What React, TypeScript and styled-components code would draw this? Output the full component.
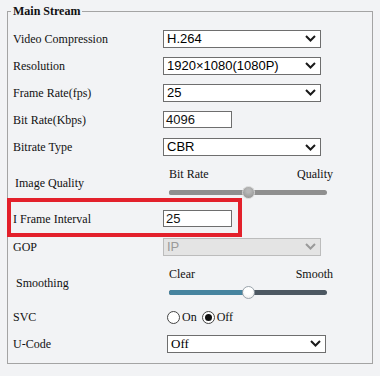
import React from 'react'
import styled, { createGlobalStyle } from 'styled-components'

const GlobalStyle = createGlobalStyle`
    html, body {
        margin: 0;
        padding: 0;
        background: #f2f3f5;
    }
    body {
        font-family: "Liberation Serif", "Times New Roman", serif;
        color: #111;
    }
`

const Page = styled.div`
    width: 380px;
    height: 376px;
    padding: 4px 7px 0 7px;
    box-sizing: border-box;
`

const Fieldset = styled.fieldset`
    margin: 0;
    padding: 7px 0 6px 0;
    border: 1px solid #a4a4a4;
    min-width: 0;
`

const Legend = styled.legend`
    margin-left: 3px;
    padding: 0 2px;
    font-size: 12px;
    line-height: 14px;
    font-weight: bold;
    color: #111;
`

const Row = styled.div<{ $h?: number }>`
    position: relative;
    display: flex;
    align-items: center;
    height: ${p => p.$h ?? 27}px;
    padding-left: 5px;
`

const Label = styled.div<{ $indent?: number }>`
    width: ${p => 150 - (p.$indent ?? 0)}px;
    padding-left: ${p => p.$indent ?? 0}px;
    font-size: 12px;
    line-height: 14px;
    flex-shrink: 0;
`

const Control = styled.div<{ $offset?: number }>`
    display: flex;
    align-items: center;
    padding-left: ${p => p.$offset ?? 0}px;
`

const SelectBox = styled.div<{ $disabled?: boolean; $serif?: boolean; $w?: number }>`
    box-sizing: border-box;
    width: ${p => p.$w ?? 158}px;
    height: 18px;
    display: flex;
    align-items: center;
    justify-content: space-between;
    padding: 0 4px 0 3px;
    border: 1px solid ${p => (p.$disabled ? '#bcbcbc' : '#6e6e6e')};
    background: ${p => (p.$disabled ? '#e4e4e4' : '#fff')};
    color: ${p => (p.$disabled ? '#9a9a9a' : '#000')};
    font-family: ${p => (p.$serif ? '"Liberation Serif", serif' : '"Liberation Sans", Arial, sans-serif')};
    font-size: 13px;
    line-height: 16px;
`

const TextInput = styled.div`
    box-sizing: border-box;
    width: 69px;
    height: 17px;
    display: flex;
    align-items: center;
    padding-left: 2px;
    border: 1px solid #6e6e6e;
    background: #fff;
    font-family: "Liberation Sans", Arial, sans-serif;
    font-size: 13px;
`

const Highlight = styled.div`
    position: absolute;
    left: -1px;
    top: -7px;
    width: 235px;
    height: 39px;
    box-sizing: border-box;
    border: 4px solid #e3202b;
    pointer-events: none;
`

const SliderWrap = styled.div`
    width: 164px;
    display: flex;
    flex-direction: column;
    gap: 5px;
`

const SliderLabels = styled.div`
    display: flex;
    justify-content: space-between;
    font-size: 12px;
    line-height: 14px;
`

const Track = styled.div<{ $left: string; $right: string }>`
    position: relative;
    width: 158px;
    height: 13px;
    &::before {
        content: '';
        position: absolute;
        left: 0;
        right: 0;
        top: 4px;
        height: 5px;
        border-radius: 3px;
        background: ${p => p.$right};
    }
    &::after {
        content: '';
        position: absolute;
        left: 0;
        width: 50%;
        top: 4px;
        height: 5px;
        border-radius: 3px 0 0 3px;
        background: ${p => p.$left};
    }
`

const Thumb = styled.div<{ $light?: boolean }>`
    position: absolute;
    z-index: 1;
    top: 0;
    width: 13px;
    height: 13px;
    margin-left: -6px;
    border-radius: 50%;
    box-sizing: border-box;
    border: 1px solid ${p => (p.$light ? '#9aa3ab' : '#d8d8d8')};
    background: ${p =>
        p.$light
            ? 'radial-gradient(circle at 50% 35%, #ffffff 40%, #e6e6e6 100%)'
            : 'radial-gradient(circle at 50% 35%, #b8b8b8 20%, #8c8c8c 100%)'};
`

const RadioGroup = styled.div`
    display: flex;
    align-items: center;
    font-size: 12px;
`

const RadioItem = styled.label`
    display: flex;
    align-items: center;
    gap: 2px;
    margin-right: 5px;
`

const RadioCircle = styled.span<{ $checked?: boolean }>`
    position: relative;
    width: 13px;
    height: 13px;
    box-sizing: border-box;
    border-radius: 50%;
    border: 1px solid #444;
    background: #fff;
    &::after {
        content: '';
        display: ${p => (p.$checked ? 'block' : 'none')};
        position: absolute;
        left: 2px;
        top: 2px;
        width: 7px;
        height: 7px;
        border-radius: 50%;
        background: #111;
    }
`

const Chevron = ({ color = '#1a1a1a' }: { color?: string }) => (
    <svg width="11" height="7" viewBox="0 0 11 7">
        <polyline points="1,1 5.5,5.5 10,1" fill="none" stroke={color} strokeWidth="2" />
    </svg>
)

type SelectProps = { value: string; disabled?: boolean; serif?: boolean; w?: number }

const Select = ({ value, disabled, serif, w }: SelectProps) => (
    <SelectBox $disabled={disabled} $serif={serif} $w={w}>
        <span>{value}</span>
        <Chevron color={disabled ? '#9a9a9a' : '#1a1a1a'} />
    </SelectBox>
)

type SliderProps = { left: string; right: string; fill: string; rest: string; light?: boolean; pos: number }

const Slider = ({ left, right, fill, rest, light, pos }: SliderProps) => (
    <SliderWrap>
        <SliderLabels>
            <span>{left}</span>
            <span>{right}</span>
        </SliderLabels>
        <Track $left={fill} $right={rest}>
            <Thumb $light={light} style={{ left: `${pos}%` }} />
        </Track>
    </SliderWrap>
)

const App = () => {
    return (
        <Page>
            <GlobalStyle />
            <Fieldset>
                <Legend>Main Stream</Legend>

                <Row>
                    <Label>Video Compression</Label>
                    <Control><Select value="H.264" /></Control>
                </Row>
                <Row>
                    <Label>Resolution</Label>
                    <Control><Select value="1920×1080(1080P)" /></Control>
                </Row>
                <Row>
                    <Label>Frame Rate(fps)</Label>
                    <Control><Select value="25" /></Control>
                </Row>
                <Row>
                    <Label>Bit Rate(Kbps)</Label>
                    <Control><TextInput>4096</TextInput></Control>
                </Row>
                <Row $h={28}>
                    <Label>Bitrate Type</Label>
                    <Control><Select value="CBR" /></Control>
                </Row>
                <Row $h={44}>
                    <Label $indent={2}>Image Quality</Label>
                    <Control $offset={6}>
                        <Slider left="Bit Rate" right="Quality" fill="#8f8f8f" rest="#8f8f8f" pos={50} />
                    </Control>
                </Row>
                <Row>
                    <Highlight />
                    <Label>I Frame Interval</Label>
                    <Control><TextInput>25</TextInput></Control>
                </Row>
                <Row $h={29}>
                    <Label>GOP</Label>
                    <Control><Select value="IP" disabled /></Control>
                </Row>
                <Row $h={43}>
                    <Label $indent={3}>Smoothing</Label>
                    <Control $offset={6}>
                        <Slider left="Clear" right="Smooth" fill="#47849f" rest="#4d5862" light pos={50} />
                    </Control>
                </Row>
                <Row $h={26}>
                    <Label>SVC</Label>
                    <Control $offset={4}>
                        <RadioGroup>
                            <RadioItem><RadioCircle />On</RadioItem>
                            <RadioItem><RadioCircle $checked />Off</RadioItem>
                        </RadioGroup>
                    </Control>
                </Row>
                <Row>
                    <Label>U-Code</Label>
                    <Control $offset={4}><Select value="Off" serif w={159} /></Control>
                </Row>
            </Fieldset>
        </Page>
    )
}

export default App
